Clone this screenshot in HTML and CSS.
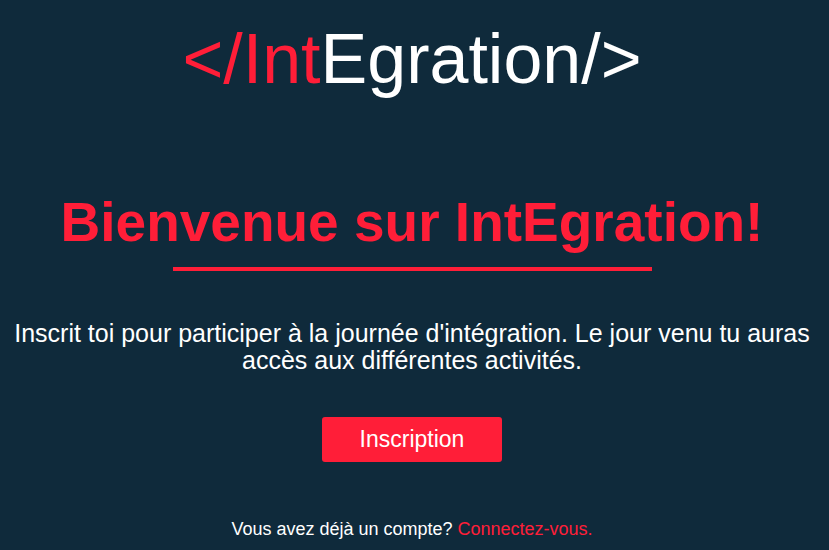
FILE: index.html
```html
<!DOCTYPE html>
<html lang="fr">
<head>
<meta charset="utf-8">
<title>IntEgration</title>
<link rel="stylesheet" href="styles.css">
</head>
<body>
<header class="logo"><span class="red">&lt;/Int</span>Egration/&gt;</header>
<main class="content">
  <h1 class="title">Bienvenue sur IntEgration!</h1>
  <div class="rule"></div>
  <p class="intro">Inscrit toi pour participer à la journée d'intégration. Le jour venu tu auras accès aux différentes activités.</p>
  <a class="btn" href="#">Inscription</a>
  <p class="login">Vous avez déjà un compte? <a class="link" href="#">Connectez-vous.</a></p>
</main>
</body>
</html>
```
FILE: styles.css
```css
html, body {
  margin: 0;
  padding: 0;
}
body {
  background: #0f2a3b;
  color: #ffffff;
  font-family: "Liberation Sans", Arial, sans-serif;
  height: 550px;
  overflow: hidden;
  padding-right: 5px;
}
.logo {
  padding-top: 19px;
  font-size: 70px;
  line-height: 80px;
  text-align: center;
  color: #ffffff;
}
.red {
  color: #ff1e38;
}
.content {
  display: flex;
  flex-direction: column;
  align-items: center;
  text-align: center;
}
.title {
  margin: 91px 0 0;
  font-size: 55px;
  line-height: 64px;
  font-weight: bold;
  color: #ff1e38;
}
.rule {
  width: 479px;
  height: 4px;
  margin-top: 13px;
  background: #ff1e38;
}
.intro {
  margin: 49px 0 0;
  padding: 0 5px;
  font-size: 25px;
  line-height: 27px;
}
.btn {
  margin-top: 43px;
  width: 180px;
  height: 45px;
  display: flex;
  align-items: center;
  justify-content: center;
  background: #ff1e38;
  color: #ffffff;
  border-radius: 3px;
  font-size: 23px;
  text-decoration: none;
}
.login {
  margin: 57px 0 0;
  font-size: 18px;
  line-height: 21px;
}
.link {
  color: #ff1e38;
  text-decoration: none;
}
```
